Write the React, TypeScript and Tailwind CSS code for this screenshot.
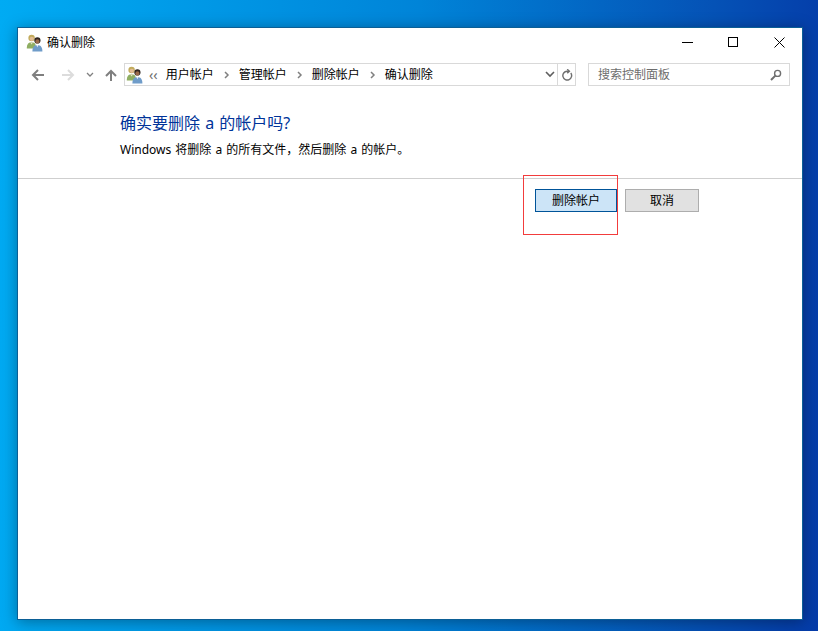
const uiFont = "font-['Noto_Sans','Noto_Sans_CJK_SC',sans-serif]";

function UsersIcon() {
  return (
    <svg viewBox="0 0 18 18" className="w-[18px] h-[18px] shrink-0">
      <circle cx="5.6" cy="4" r="3.2" fill="#c2ab5c" />
      <circle cx="5.8" cy="4.8" r="2.1" fill="#e3bd95" />
      <path d="M0.8 13.5c0-3.4 2-5.2 4.8-5.2 2.4 0 3.6 1 4 2.6v3.6H0.8z" fill="#8fae62" />
      <path d="M4.2 8.4l1.4 2 1.4-2z" fill="#e9e3c8" />
      <circle cx="11.4" cy="6.4" r="3.1" fill="#2e241f" />
      <circle cx="11.4" cy="7.4" r="2.1" fill="#9a6a4a" />
      <path d="M6.4 17.4c0-4.4 2-6.4 5-6.4s5 2 5 6.4z" fill="#6f9cc9" />
      <path d="M10.2 11l1.2 2.2 1.2-2.2z" fill="#e8eef5" />
    </svg>
  );
}

function NavArrow({ d, color }: { d: string; color: string }) {
  return (
    <svg viewBox="0 0 16 14" className="w-4 h-[14px]" fill="none" stroke={color} strokeWidth={2}>
      <path d={d} />
    </svg>
  );
}

function Chevron() {
  return (
    <svg viewBox="0 0 6 8" className="w-[6px] h-2 ml-[10px] mr-[9px]" fill="none" stroke="#808080" strokeWidth={1.5}>
      <path d="M1 1l3 3-3 3" />
    </svg>
  );
}

export default function App() {
  const crumbs = ['用户帐户', '管理帐户', '删除帐户', '确认删除'];

  return (
    <div className={`w-[818px] h-[631px] overflow-hidden pl-[17px] pt-[27px] bg-[linear-gradient(92deg,#00abf3_0%,#0084d8_50%,#0552b6_85%,#053ba8_100%)] ${uiFont}`}>
      <div className="relative w-[786px] h-[593px] bg-white border border-[#0b5f96] flex flex-col shadow-[0_2px_14px_rgba(0,0,0,0.35)]">
        {/* Title bar */}
        <div className="h-[29px] flex items-center shrink-0 pl-[8px]">
          <UsersIcon />
          <span className="ml-[3px] text-[12px] text-black">确认删除</span>
          <div className="ml-auto flex items-center h-full">
            <div className="w-[46px] h-full flex items-center justify-center">
              <svg viewBox="0 0 11 11" className="w-[11px] h-[11px]" stroke="#000" fill="none"><path d="M0 5.5h11" /></svg>
            </div>
            <div className="w-[46px] h-full flex items-center justify-center">
              <svg viewBox="0 0 11 11" className="w-[11px] h-[11px]" stroke="#000" fill="none"><rect x="0.5" y="0.5" width="9" height="9" /></svg>
            </div>
            <div className="w-[46px] h-full flex items-center justify-center">
              <svg viewBox="0 0 11 11" className="w-[11px] h-[11px]" stroke="#000" fill="none"><path d="M0.5 0.5l10 10M10.5 0.5l-10 10" /></svg>
            </div>
          </div>
        </div>

        {/* Navigation row */}
        <div className="h-[23px] mt-[6px] flex items-center shrink-0 pl-[12px]">
          <NavArrow d="M14 7H3M8 2L3 7l5 5" color="#7f7f7f" />
          <div className="ml-[14px]"><NavArrow d="M2 7h11M8 2l5 5-5 5" color="#dcdcdc" /></div>
          <svg viewBox="0 0 8 6" className="w-2 h-[6px] ml-[10px]" fill="none" stroke="#808080" strokeWidth={1.3}>
            <path d="M1 1l3 3 3-3" />
          </svg>
          <div className="ml-[9px]"><NavArrow d="M8 13V3M3 8l5-5 5 5" color="#7f7f7f" /></div>
          <div className="ml-[5px] w-[452px] h-[23px] border border-[#d9d9d9] flex items-center">
            <div className="ml-[1px]"><UsersIcon /></div>
            <span className="ml-[5px] text-[14px] text-[#6d6d6d] leading-none">‹‹</span>
            <div className="ml-[8px] flex items-center text-[12px] text-black">
              {crumbs.map((c, i) => (
                <span key={c} className="flex items-center">
                  {i > 0 && <Chevron />}
                  {c}
                </span>
              ))}
            </div>
            <div className="ml-auto w-[15px] h-full flex items-center justify-center">
              <svg viewBox="0 0 10 7" className="w-[10px] h-[7px]" fill="none" stroke="#5f5f5f" strokeWidth={1.6}>
                <path d="M1 1l4 4 4-4" />
              </svg>
            </div>
            <div className="w-[18px] h-full border-l border-[#d9d9d9] flex items-center justify-center">
              <svg viewBox="0 0 12 12" className="w-3 h-3" fill="none" stroke="#6f6f6f" strokeWidth={1.4}>
                <path d="M9.8 4A4.4 4.4 0 1 1 6 2.2H8" />
                <path d="M6.2 0.3l2.2 1.9-2.2 1.9" />
              </svg>
            </div>
          </div>
          <div className="ml-[12px] w-[202px] h-[23px] border border-[#d9d9d9] flex items-center pl-[9px] pr-[7px]">
            <span className="text-[12px] text-[#6d6d6d]">搜索控制面板</span>
            <svg viewBox="0 0 12 12" className="ml-auto w-3 h-3" fill="none" stroke="#6f6f6f">
              <circle cx="7.6" cy="4.4" r="3" strokeWidth={1.4} />
              <path d="M5.4 6.6L1 11" strokeWidth={2} />
            </svg>
          </div>
        </div>

        {/* Confirmation text */}
        <div className="pl-[102px] pt-[26px] h-[93px] border-b border-[#cfcfcf] shrink-0">
          <h1 className="text-[16px] leading-[22px] text-[#003399] [word-spacing:1px]">确实要删除 a 的帐户吗?</h1>
          <p className="mt-[7px] text-[12px] leading-[18px] text-black [word-spacing:1px]">Windows 将删除 a 的所有文件，然后删除 a 的帐户。</p>
        </div>

        {/* Buttons */}
        <div className="flex pt-[10px] pl-[517px] gap-[8px]">
          <button className="w-[82px] h-[23px] bg-[#cce4f7] border border-[#005499] text-[12px] text-black flex items-center justify-center">删除帐户</button>
          <button className="w-[74px] h-[23px] bg-[#e1e1e1] border border-[#adadad] text-[12px] text-black flex items-center justify-center">取消</button>
        </div>

        {/* Red annotation from the screenshot */}
        <div className="absolute left-[505px] top-[147px] w-[95px] h-[60px] border border-[#f23c3c]" />
      </div>
    </div>
  );
}
